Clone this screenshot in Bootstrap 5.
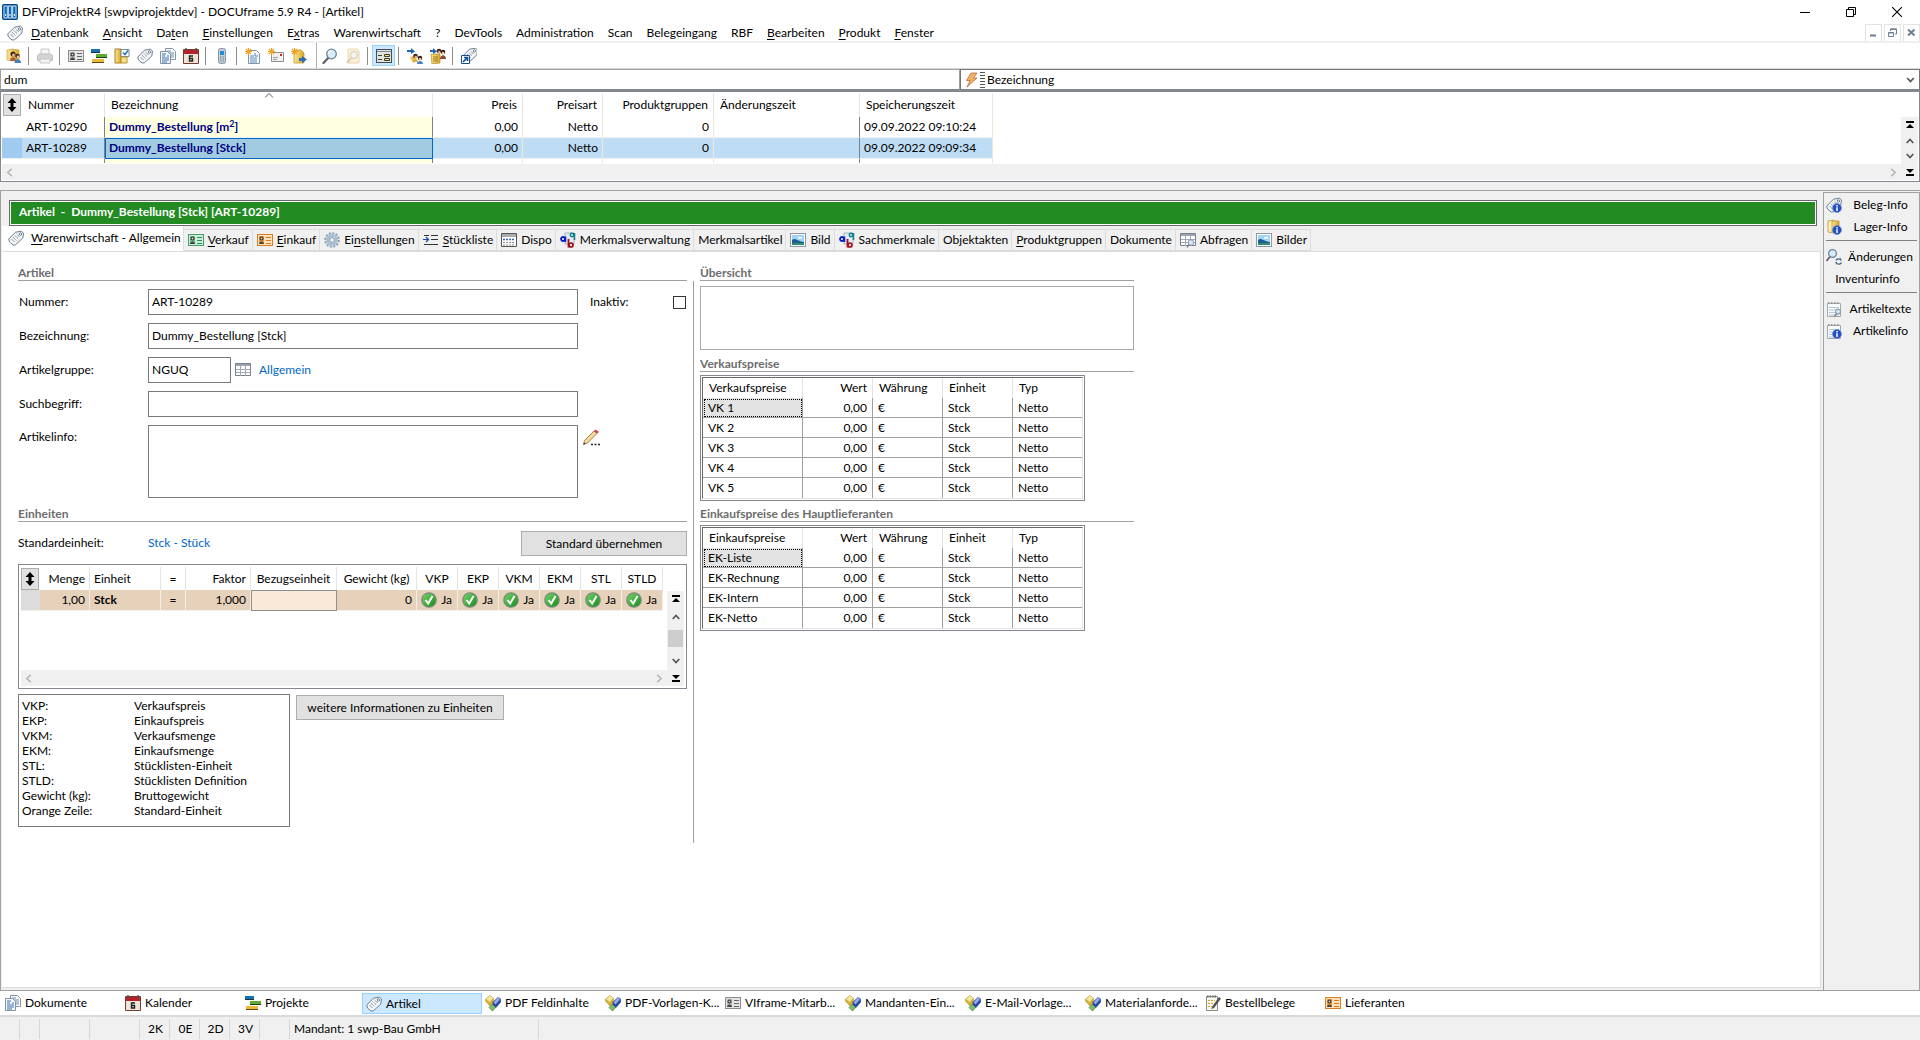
<!DOCTYPE html>
<html lang="de">
<head>
<meta charset="utf-8">
<meta name="viewport" content="width=device-width, initial-scale=1">
<title>DFViProjektR4 [swpviprojektdev] - DOCUframe 5.9 R4 - [Artikel]</title>
<link href="https://cdn.jsdelivr.net/npm/bootstrap@5.3.0/dist/css/bootstrap.min.css" rel="stylesheet">
<style>
:root{--face:#f0f0f0;--line:#a0a0a0;--edge:#828790;--soft:#d9d9d9}
body{font:12px/16px Lato,"Open Sans",sans-serif;color:#000;background:#fff}
a{color:inherit;text-decoration:none}
button,input,textarea,select{font:inherit;color:inherit}
u{text-underline-offset:2px}
.ico{width:16px;height:16px;flex:none;display:block}
.plainbtn{border:0;background:none;padding:0;display:flex;align-items:center;justify-content:center}
/* title bar and menu */
.titlebar{height:22px;padding:2px 0 0 2px}
.winbtn{width:46px;height:20px}
.menubar{height:19px;padding:2px 0 0 7px}
.menubar nav{gap:14px}
.mdi{gap:2px}
.mdi button{width:17px;height:18px;border:1px solid #e3e3e3}
.toolbar{height:28px;border-top:2px solid var(--face);border-bottom:1px solid var(--soft);padding-left:2px}
.tool{width:23px;height:21px}
.tool.on{background:#cce8ff;border:1px solid #99d1ff}
.tsep{width:1px;height:18px;background:#8a8a8a;margin:0 4px 0 3px}
.tsep.tall{height:25px;background:#b0b0b0;margin:0 1px 0 6px}
/* search */
.searchrow{height:22px}
.searchrow input{width:50%;border:1px solid #a0a0a0;border-bottom:2px solid #828790;padding:0 3px;outline:0}
.pick{width:50%;border:1px solid #767676;border-bottom:2px solid #828790;padding-left:3px}
.pick select{border:0;background:none;appearance:none;outline:0;padding:0 2px}
/* grids */
.sheet{table-layout:fixed;border-collapse:separate;border-spacing:0}
.sheet th{font-weight:400;white-space:nowrap}
.sheet td,.sheet th{overflow:hidden;white-space:nowrap;padding:0 4px}
.result{height:91px;border:1px solid var(--edge);padding:1px}
.result .sheet{width:991px}
.result th{height:24px;border-right:1px solid #e5e5e5;padding:0 5px 0 6px}
.result thead th:first-child{padding:1px 1px}
.result td{height:21px;border-right:1px solid #ece9d8;border-bottom:1px solid #f0f0f0}
.result td:nth-child(2),.result td:nth-child(3),.result td:nth-child(7){border-right-color:#808080}
.result td:nth-child(1){border-right:0}
.result th:nth-child(1){border-right:0}
.result .short td{height:4px;border-bottom:0;line-height:0}
.result td.hl{background:#ffffe1;color:#000080;font-weight:700}
.result .sel td{background:#bedcf4}
.result .sel td.hl{background:#a0cbe1;outline:1px solid #0066cc;outline-offset:-1px}
.result .sel td:first-child{background:#9fcbf0}
.result td.hl sup{font-size:9px;line-height:0}
.updown{width:18px;height:22px;border:1px solid #adadad;background:#e1e1e1}
.hbar{height:16px;background:var(--face);color:#b8b8b8;padding:0 3px}
.vbar{width:17px;background:var(--face)}
.splitgap{height:8px;background:var(--face)}
/* main */
.work{background:var(--face);border-top:1px solid var(--line);border-left:1px solid var(--line);border-bottom:1px solid var(--line)}
.workpane{padding:0 2px 2px 1px}
.docband{margin:9px 4px 0 7px;height:26px;border:1px solid #696969;padding:1px;background:#fff}
.docband h1{font-size:12px;line-height:20px;font-weight:700;color:#fff;background:#228b22;margin:0;padding:0 8px;height:22px}
.tabs{height:25px;align-items:flex-end}
.tabs .nav-link{border:1px solid #dcdcdc;border-left:0;border-radius:0;background:var(--face);height:22px;padding:0 3px 0 4px;color:#000;display:flex;align-items:center;gap:4px;margin:0;white-space:nowrap;line-height:16px}
.tabs .nav-link.active{background:#fff;height:25px;border-color:#fff #dcdcdc #fff #fff;padding:0 2px 2px 6px;gap:7px}
.page{background:#fff;border-right:1px solid #dcdcdc;border-bottom:1px solid #dcdcdc;border-top:1px solid #dcdcdc;padding:13px 0 0 16px}
.leftcol{width:669px}
.divider{width:1px;background:#a0a0a0;margin:16px 6px 0 6px;height:562px}
.rightcol{width:434px}
.group{font-size:12px;line-height:15px;font-weight:700;color:#6d6d6d;margin:0;height:16px;border-bottom:1px solid #a0a0a0}
.fieldline{height:26px;margin-bottom:8px}
.lab{width:130px;padding-left:1px}
.box{border:1px solid #7a7a7a;padding:0 3px 2px;width:430px;height:26px;background:#fff;outline:0;border-radius:0}
.box.slim{width:83px}
textarea.box{height:73px;resize:none;display:block}
.tick{appearance:none;width:13px;height:13px;border:1px solid #333;margin:0 1px 0 auto}
.inact{margin-left:12px}
.below{margin-top:8px}
.stdline{margin:9px 0 8px}
.wide{width:166px}
.linkish{color:#0066cc}
.face{border:1px solid #adadad;background:#e1e1e1;padding:0 8px;height:25px}
.face.more{width:208px;margin:1px 0 0 6px}
.legendrow{margin-top:5px}
.units{height:125px;border:1px solid var(--edge);padding:2px}
.units .sheet{width:642px}
.units th{height:23px;border-right:1px solid #e5e5e5}
.units td{height:21px;background:#e6d1bb;border-right:1px solid #f4eee6;border-bottom:1px solid #f0f0f0}
.units th:first-child{border:0;padding:0}
.units td:first-child{background:#dcdcdc;border-right:0}
.units td.cur{background:#fae8d8;border:1px solid #8f8f8f}
.units td.yes{padding:0 5px 0 4px}
.thumb{width:15px;height:17px;background:#cdcdcd}
.legend{width:272px;height:133px;border:1px solid #7a7a7a;padding:3px 3px;line-height:15px;margin:0}
.legend dt{font-weight:400;width:112px;flex:none}
.legend dd{margin:0}
.over{height:64px;border:1px solid #a9a9a9;resize:none;outline:0;display:block;width:100%;margin:5px 0 6px}
.pricebox{border:1px solid var(--edge);padding:1px;width:385px;margin:3px 0 5px}
.prices{width:381px;border-top:1px solid #696969;border-left:1px solid #696969;border-right:1px solid #e3e3e3;border-bottom:1px solid #e3e3e3}
.prices th{height:20px;border-right:1px solid #e3e3e3;padding:0 5px 0 6px}
.prices td{height:20px;border-right:1px solid #a0a0a0;border-bottom:1px solid #a0a0a0;padding:0 5px}
.prices td:last-child,.prices th:last-child{border-right:0}
.prices tr:last-child td{border-bottom:0}
.prices td.foc{background:#e3e3e3;outline:1px dotted #000;outline-offset:-2px}
/* side */
.side{width:97px;border-left:1px solid var(--line);border-right:1px solid var(--line);border-top:1px solid var(--line);margin-top:1px;padding:1px 2px}
.side a{height:22px;display:flex;align-items:center;gap:2px;white-space:nowrap}
.side a span{flex:1;text-align:center}
.side hr{margin:2px 0 5px;opacity:1;border-top:1px solid #808080}
/* bottom */
.taskbar{height:26px;border-bottom:2px solid var(--soft);padding:2px 0 1px 2px;background:#fff}
.taskbar a{width:120px;padding:0 2px 1px;gap:4px;display:flex;align-items:center;white-space:nowrap;border:1px solid transparent}
.taskbar a.on{background:#cce8ff;border-color:#99d1ff;padding:1px 3px 0}
.status{height:23px;background:var(--face);padding-top:2px}
.status span{border-right:1px solid #d7d7d7;height:20px;line-height:20px;text-align:center;padding-left:2px}
.w20{width:20px}.w30{width:30px}.w50{width:50px}
.status .client{width:249px;text-align:left;padding-left:4px}
</style>
</head>
<body class="d-flex flex-column min-vh-100">
<svg width="0" height="0" class="position-absolute" aria-hidden="true">
<defs>
<linearGradient id="gy" x1="0" x2="1"><stop offset="0" stop-color="#fbe591"/><stop offset="1" stop-color="#d9a826"/></linearGradient>
<linearGradient id="gg" x1="0" y1="0" x2="1" y2="1"><stop offset="0" stop-color="#79d66b"/><stop offset="1" stop-color="#0f8a16"/></linearGradient>
<symbol id="tag" viewBox="0 0 16 16"><path d="M.7 9 7.500 2.200l6-1 2 1.800-.7 5L7.500 14.800l-2.500.2L1.500 12z" fill="#f3f6f8" stroke="#6c7f90" stroke-linejoin="round"/><circle cx="12.500" cy="4" r="1.200" fill="#fff" stroke="#6c7f90"/><path d="M3.500 9 7 12.500M5.200 7.300 8.700 10.800M7 5.600 10.500 9.100M8.700 4 12 7.300" stroke="#5e6d7c" stroke-dasharray="1 .6"/></symbol>
<symbol id="card" viewBox="0 0 16 16"><rect x=".5" y="2.500" width="15" height="11" fill="var(--c1,#e4e4e4)" stroke="var(--c2,#8c8c8c)"/><rect x="2" y="4" width="5" height="8" fill="var(--c3,#bcbcbc)"/><circle cx="4.500" cy="6.500" r="1.500" fill="#f0d5bd" stroke="#333" stroke-width="1.200"/><path d="M2 12c0-3.500 5-3.500 5 0z" fill="#444"/><path d="M9 5.500h5M9 8.500h5M9 11.500h5" stroke="var(--c4,#666)"/></symbol>
<symbol id="gantt" viewBox="0 0 16 16"><path d="M0 1h9v3.500H0z" fill="#1573b5"/><path d="M0 4h9v1H0z" fill="#1d2f40"/><path d="M5 6h11v3H5z" fill="#5aad2f"/><path d="M5 9h11v1H5z" fill="#1f3d19"/><path d="M1 11h12v3.500H1z" fill="#efb93c"/><path d="M1 14h12v1H1z" fill="#5e4714"/></symbol>
<symbol id="door" viewBox="0 0 16 16"><path d="M1 1h6v14H1z" fill="url(#gy)" stroke="#a98226"/><path d="M7 1.500h8v7H7z" fill="#fff" stroke="#6f8ba6"/><path d="m9 4.500 2 2 3-4" fill="none" stroke="#2674b8" stroke-width="1.500"/><path d="M7 9h6v6H7z" fill="#f4dd8c" stroke="#b8912d"/></symbol>
<symbol id="docs" viewBox="0 0 16 16"><path d="M5.500.5h7l3 3v8h-10z" fill="#fff" stroke="#8292a1"/><path d="M7 3h4M9 5h5M9 7h5M9 9h5" stroke="#6687b0"/><path d="M.5 3.500h7l3 3v9H.5z" fill="#f4f8fc" stroke="#8292a1"/><path d="M2 6h4M2 8h3M7 8h2M2 10h7M2 12h7M2 14h5" stroke="#3f6fae"/></symbol>
<symbol id="cal" viewBox="0 0 16 16"><path d="M.5 1.500h15v14H.5z" fill="#ece5d8" stroke="#7a3a30"/><path d="M1 2h14v4H1z" fill="#b4232b"/><path d="M3 0v3M13 0v3" stroke="#555" stroke-width="1.500"/><path d="M10 8H6.500v5h3v-2.500H7" fill="none" stroke="#222" stroke-width="1.400"/></symbol>
<symbol id="people" viewBox="0 0 16 16"><path d="M1 2 6 1l7 1v10l-6 1-6-1z" fill="url(#gy)" stroke="#c99c34" stroke-width=".6"/><circle cx="7" cy="6" r="2.500" fill="#402418"/><circle cx="7.500" cy="7" r="1.500" fill="#e6b58c"/><path d="M4 13c0-5 6-5 6 0z" fill="#a85c40"/><circle cx="11.500" cy="8" r="2.300" fill="#402418"/><circle cx="12" cy="9" r="1.400" fill="#f0c7a0"/><path d="M8.500 15c0-5 6.500-5 6.500 0z" fill="#4683bd"/></symbol>
<symbol id="arrpeople" viewBox="0 0 16 16"><path d="M0 2h4V0l4 3.500L4 6V4H0z" fill="#1768bd"/><path d="M3 9l4-1 3 5-4 2z" fill="#e7bf50"/><circle cx="8.500" cy="8" r="2.300" fill="#402418"/><circle cx="8.800" cy="9" r="1.300" fill="#e6b58c"/><path d="M6 14c0-4 5-4 5 0z" fill="#e0b23c"/><circle cx="13" cy="10" r="2.200" fill="#2b1a14"/><circle cx="13" cy="11" r="1.300" fill="#f0c7a0"/><path d="M10 16c0-4 6-4 6 0z" fill="#4683bd"/></symbol>
<symbol id="handpeople" viewBox="0 0 16 16"><path d="M1 6h9v9l-8 1z" fill="url(#gy)" stroke="#b58b28" stroke-width=".7"/><path d="M3 9h5M3 11h5M3 13h5" stroke="#a17a20"/><path d="M0 2h3V0l4 3.500L3 6V4H0z" fill="#1768bd"/><circle cx="9" cy="3" r="2.300" fill="#402418"/><circle cx="9.300" cy="4" r="1.300" fill="#e6b58c"/><circle cx="13" cy="4" r="2.300" fill="#2b1a14"/><circle cx="13" cy="5.200" r="1.400" fill="#f0c7a0"/><path d="M10 11c0-5 6-5 6 0z" fill="#8d4c38"/></symbol>
<symbol id="printer" viewBox="0 0 16 16"><path d="M4 1h8v6H4z" fill="#f5f5f5" stroke="#c6c6c6"/><path d="M.5 7.500 2 6h12l1.500 1.500v5H.5z" fill="#d4d4d4" stroke="#bebebe"/><path d="M3 11h10v4H3z" fill="#f3f3f3" stroke="#c6c6c6"/></symbol>
<symbol id="phone" viewBox="0 0 16 16"><rect x="4.500" y=".5" width="7" height="15" rx="2" fill="#c5cdd6" stroke="#8795a3"/><path d="M6 3h4v4H6z" fill="#1d8ddb"/><path d="M6 9h4M6 11h4M6 13h4" stroke="#7b8794" stroke-dasharray="1 .5"/></symbol>
<symbol id="star" viewBox="0 0 16 16"><path d="M3.500 0v7M0 3.500h7M1 1l5 5M6 1 1 6" stroke="#f0a11c" stroke-width="1.100"/></symbol>
<symbol id="newdoc" viewBox="0 0 16 16"><path d="M3.500 2.500h8l3 3v10h-11z" fill="#f6fafd" stroke="#8193a5"/><path d="M5 8h4M5 10h7M5 12h7M5 14h7M10 5v3h3" stroke="#5f88b8" fill="none"/><use href="#star"/></symbol>
<symbol id="newmail" viewBox="0 0 16 16"><path d="M3.500 4.500h12v9h-12z" fill="#f2f2f2" stroke="#8e8e8e"/><path d="M5 9.500h5M5 11.500h4" stroke="#9a9a9a"/><path d="M12 6h2v2h-2z" fill="#c32b2b"/><use href="#star"/></symbol>
<symbol id="newfolder" viewBox="0 0 16 16"><path d="M3 2h7l3 3v10H3z" fill="url(#gy)" stroke="#b58b28" stroke-width=".7"/><path d="M8 10h3V8l5 3.500-5 3.500v-2H8z" fill="#2c6bb4"/><use href="#star"/></symbol>
<symbol id="lens" viewBox="0 0 16 16"><path d="m6.500 9.500-5 5.500" stroke="#635e6c" stroke-width="2.200" stroke-linecap="round"/><circle cx="9.500" cy="6" r="4.800" fill="#d4ecfb" stroke="#6c8294" stroke-width="1.300"/><path d="M6.500 6c0-2 1.500-3 3-3" fill="none" stroke="#fff" stroke-width="1.300"/></symbol>
<symbol id="lensoff" viewBox="0 0 16 16"><path d="M3 1h9l2 2v12H3z" fill="#fbf0d4" stroke="#e8d8ae"/><circle cx="9" cy="7" r="3.500" fill="#f3f3f0" stroke="#d2ccb8"/><path d="m6 10-4 5" stroke="#d2ccb8" stroke-width="2"/></symbol>
<symbol id="form" viewBox="0 0 16 16"><rect x=".5" y="1.500" width="15" height="13" fill="#e3e3dc" stroke="#404c58"/><path d="M1 3.500h14" stroke="#7a8a9a"/><path d="M2 7.500h4M2 11.500h4M8.500 6.500h5v2h-5zM8.500 10.500h5v2h-5z" stroke="#3c3c3c" fill="#ffd863"/></symbol>
<symbol id="taglink" viewBox="0 0 16 16"><use href="#tag" x="1" y="-1"/><path d="M.5 7.500h8v8h-8z" fill="#fff" stroke="#1a4e8c"/><path d="m2 14 4-4M3 9.500h3.500V13" stroke="#0b4c9c" stroke-width="1.600" fill="none"/></symbol>
<symbol id="app" viewBox="0 0 16 16"><rect x=".5" y=".5" width="15" height="15" rx="1" fill="#1268b3" stroke="#0a477e"/><path d="M2 2h3.300v12H2zM6.400 2h3.300v12H6.400zM10.700 2H14v12h-3.300z" fill="#1268b3" stroke="#d8ebfa" stroke-width=".9"/><path d="M3.600 10v2M8 10v2M12.400 10v2" stroke="#fff"/></symbol>
<symbol id="bolt" viewBox="0 0 16 16"><path d="M7 1h6L9.500 6H13L3 15l3-6.500H2.500z" fill="#f2b167" stroke="#b4703a" stroke-width=".8"/></symbol>
<symbol id="bars" viewBox="0 0 5 16"><path d="M0 .5h5M0 3.500h5M0 6.500h5M0 9.500h5M0 12.500h5M0 15.500h5" stroke="#555"/></symbol>
<symbol id="ud" viewBox="0 0 10 14"><path d="M5 0l4.500 5H6.500v4h3L5 14 .5 9h3V5h-3z"/></symbol>
<symbol id="totop" viewBox="0 0 8 8"><path d="M0 0h8v2H0zM4 3l4 4H0z"/></symbol>
<symbol id="tobot" viewBox="0 0 8 8"><path d="M0 6h8v2H0zM4 5 0 1h8z"/></symbol>
<symbol id="up" viewBox="0 0 8 8"><path d="m.7 6 3.300-3.500L7.300 6" fill="none" stroke="currentColor" stroke-width="1.700"/></symbol>
<symbol id="chev" viewBox="0 0 9 5"><path d="m.5 4.500 4-4 4 4" fill="none" stroke="#555"/></symbol>
<symbol id="down" viewBox="0 0 8 8"><path d="m.7 2 3.300 3.500L7.300 2" fill="none" stroke="currentColor" stroke-width="1.700"/></symbol>
<symbol id="left" viewBox="0 0 8 8"><path d="M6 .7 2.500 4 6 7.300" fill="none" stroke="currentColor" stroke-width="1.500"/></symbol>
<symbol id="right" viewBox="0 0 8 8"><path d="M2 .7 5.500 4 2 7.300" fill="none" stroke="currentColor" stroke-width="1.500"/></symbol>
<symbol id="gear" viewBox="0 0 16 16"><circle cx="8" cy="8" r="6.800" fill="none" stroke="#8aa3ba" stroke-width="2" stroke-dasharray="2.200 1.360"/><circle cx="8" cy="8" r="4.500" fill="none" stroke="#a9bed1" stroke-width="3"/><circle cx="8" cy="8" r="2.400" fill="#f0f0f0" stroke="#7f98af"/></symbol>
<symbol id="listin" viewBox="0 0 16 16"><path d="M8 3.500h7M8 7.500h7M1 12.500h14M1 3.500h5" stroke="#333"/><path d="M0 7.500h5M3 5 5.500 7.500 3 10" stroke="#1548a8" fill="none" stroke-width="1.200"/></symbol>
<symbol id="sched" viewBox="0 0 16 16"><path d="M.5 1.500h15v13H.5z" fill="#fff" stroke="#555"/><path d="M1 2h14v3H1z" fill="#a9adb2"/><path d="M2 7.500h12" stroke="#2a68b8" stroke-width="1.500" stroke-dasharray="2 1"/><path d="M2 10.500h12M2 13h12" stroke="#888" stroke-dasharray="2 1"/></symbol>
<symbol id="abq" viewBox="0 0 16 16"><path d="M5 1h9v11H5z" fill="#e4eaf1" stroke="#8ba0b4" stroke-width=".7"/><circle cx="3" cy="7" r="2" fill="none" stroke="#0a1ec8" stroke-width="1.800"/><path d="M5.500 4.500V10" stroke="#0a1ec8" stroke-width="1.500"/><path d="M8.500 7v8.500" stroke="#a01018" stroke-width="1.800"/><circle cx="11" cy="13" r="2" fill="none" stroke="#a01018" stroke-width="1.700"/><circle cx="12" cy="3" r="1.700" fill="none" stroke="#108088" stroke-width="1.500"/><path d="M14.500 1v7" stroke="#108088" stroke-width="1.500"/></symbol>
<symbol id="pic" viewBox="0 0 16 16"><rect x=".5" y="1.500" width="15" height="13" fill="#fff" stroke="#8d9aa6"/><path d="M2 3h12v10H2z" fill="#a3d4f3"/><path d="M2 8c3-3 5 1 12 2v3H2z" fill="#1d5f94"/><path d="M2 11h12v2H2z" fill="#2f8d6a"/><path d="M8 5h4v1.500H8z" fill="#fff"/></symbol>
<symbol id="tbl" viewBox="0 0 16 16"><path d="M.5 1.500h15v12H.5z" fill="#fff" stroke="#777f88"/><path d="M1 2h14v2H1z" fill="#9ba6b2"/><path d="M1 7.500h14M1 10.500h14M5.500 4v10M10.500 4v10" stroke="#a2a9b0"/></symbol>
<symbol id="tblq" viewBox="0 0 16 16"><use href="#tbl"/><circle cx="11" cy="10.500" r="2.800" fill="#d4e6f4" stroke="#8496a8"/><path d="m9 12.500-2 3" stroke="#777" stroke-width="1.300"/></symbol>
<symbol id="pencil" viewBox="0 0 18 18"><path d="m1.500 15.500 1-4L12 2l3 2.500-9.500 9.500z" fill="#f5d79a" stroke="#8d6b38" stroke-width=".8"/><path d="m12 2 1.500-1.500L17 3l-2 1.500z" fill="#c8424d"/><path d="m1.500 15.500.5-2 1.500 1.200z" fill="#222"/><path d="M9 15.500h2M12.500 15.500h2M16 15.500h2" stroke="#222" stroke-width="1.500"/></symbol>
<symbol id="ok" viewBox="0 0 16 16"><circle cx="8" cy="8" r="7.200" fill="url(#gg)" stroke="#7d8a7d" stroke-width="1.300"/><path d="m4.500 8 2.700 3.500L11.500 4" fill="none" stroke="#fff" stroke-width="2"/></symbol>
<symbol id="info" viewBox="0 0 16 16"><circle cx="11" cy="11" r="4.500" fill="#2350c0" stroke="#7391de" stroke-width=".7"/><path d="M11 8v1.500M11 10.200V14" stroke="#fff" stroke-width="1.500"/></symbol>
<symbol id="taginfo" viewBox="0 0 16 16"><use href="#tag"/><use href="#info"/></symbol>
<symbol id="boxinfo" viewBox="0 0 16 16"><path d="M2 2 8 1v13l-6-1z" fill="#fff0b0" stroke="#b58b28" stroke-width=".7"/><path d="M6 2h7v11H6z" fill="url(#gy)" stroke="#b58b28" stroke-width=".7"/><use href="#info"/></symbol>
<symbol id="lensref" viewBox="0 0 16 16"><path d="m4.500 7-4 5" stroke="#635e6c" stroke-width="1.800"/><circle cx="6.500" cy="4.500" r="3.900" fill="#d4ecfb" stroke="#6c8294" stroke-width="1.200"/><path d="M10 11.500c1-2 3-2 4.500-1M15.500 13.500c-1 2-3 2-4.500 1" fill="none" stroke="#3f6488" stroke-width="1.400"/><path d="M14 8.500v3h2zM11 16v-3H9z" fill="#3f6488"/></symbol>
<symbol id="note" viewBox="0 0 16 16"><path d="M1.500 2.500h13v13h-13z" fill="#f7f9fa" stroke="#a2aab1"/><path d="M2 2h12" stroke="#999" stroke-width="2" stroke-dasharray="1.500 1.500"/><path d="M3 6.500h10M3 9h10M3 11.500h10M3 14h10" stroke="#b4c6d2"/></symbol>
<symbol id="noteq" viewBox="0 0 16 16"><use href="#note"/><circle cx="12" cy="10.500" r="2.500" fill="#cfe5f5" stroke="#7a90a4"/><path d="m10.500 12.500-2 3" stroke="#666" stroke-width="1.300"/></symbol>
<symbol id="noteinfo" viewBox="0 0 16 16"><use href="#note"/><use href="#info"/></symbol>
<symbol id="notepen" viewBox="0 0 16 16"><path d="M1.500 1.500h11v14h-11z" fill="#f7f5e6" stroke="#8d8d85"/><path d="M2 1.500h10" stroke="#666" stroke-width="2" stroke-dasharray="1.500 1"/><path d="M3 5.500h7M3 8.500h5M3 11.500h4" stroke="#d0a02a" stroke-dasharray="2 1"/><path d="m7 12 7-10 2 1.500-7 9.500-2.500 1z" fill="#4b4f54"/></symbol>
<symbol id="cubes" viewBox="0 0 16 16"><path d="M7.500 9 11 12l-3.500 4L4 12.500z" fill="#7cc065" stroke="#357226" stroke-width=".6"/><path d="m5 .5 3.500 3L8 8l-3 3-4.500-5L.7 4z" fill="#d8b032" stroke="#9a7d22" stroke-width=".6"/><path d="m1 4 4-3.500L8 3.500 4.500 7z" fill="#f6e69a"/><path d="M13 2.500 15.700 4v3L11 12.500 8 9.500V7z" fill="#2445b0" stroke="#26418e" stroke-width=".6"/><path d="M8.500 7.500 13 2.500 15 4.500l-4.500 5z" fill="#94aeea"/></symbol>
</defs></svg>

<header class="titlebar d-flex align-items-center">
 <svg class="ico"><use href="#app"/></svg>
 <span class="ps-1 flex-grow-1 text-nowrap">DFViProjektR4 [swpviprojektdev] - DOCUframe 5.9 R4 - [Artikel]</span>
 <button class="plainbtn winbtn" aria-label="Minimieren"><svg width="10" height="10"><path d="M0 5.500h10" stroke="#000"/></svg></button>
 <button class="plainbtn winbtn" aria-label="Wiederherstellen"><svg width="10" height="10"><path d="M.5 2.500h7v7h-7zM2.500 2V.5h7v7H8" fill="none" stroke="#000"/></svg></button>
 <button class="plainbtn winbtn" aria-label="Schließen"><svg width="10" height="10"><path d="m0 0 10 10M10 0 0 10" stroke="#000" stroke-width="1.100"/></svg></button>
</header>
<div class="menubar d-flex align-items-center">
 <svg class="ico me-2"><use href="#tag"/></svg>
 <nav class="d-flex flex-grow-1 text-nowrap">
  <a href="#"><u>D</u>atenbank</a><a href="#"><u>A</u>nsicht</a><a href="#">Da<u>t</u>en</a><a href="#"><u>E</u>instellungen</a><a href="#">E<u>x</u>tras</a><a href="#">Warenwirtschaft</a><a href="#">?</a><a href="#">DevTools</a><a href="#">Administration</a><a href="#">Scan</a><a href="#">Belegeingang</a><a href="#">RBF</a><a href="#"><u>B</u>earbeiten</a><a href="#"><u>P</u>rodukt</a><a href="#"><u>F</u>enster</a>
 </nav>
 <div class="mdi d-flex">
  <button class="plainbtn" aria-label="Fenster minimieren"><svg width="9" height="9"><path d="M1 7.500h6" stroke="#6d7f92" stroke-width="2"/></svg></button>
  <button class="plainbtn" aria-label="Fenster wiederherstellen"><svg width="9" height="9"><path d="M.5 4.500h5v4h-5zM2.500 3V.8h6V6H7M.5 5h5M2.500 1.500h6" fill="none" stroke="#6d7f92"/></svg></button>
  <button class="plainbtn" aria-label="Fenster schließen"><svg width="9" height="9"><path d="m1 1.500 6.500 6M7.500 1.500l-6.500 6" stroke="#6d7f92" stroke-width="2"/></svg></button>
 </div>
</div>
<div class="toolbar d-flex align-items-center" role="toolbar">
 <button class="plainbtn tool" aria-label="Anmelden"><svg class="ico"><use href="#people"/></svg></button><i class="tsep"></i>
 <button class="plainbtn tool" aria-label="Drucken"><svg class="ico"><use href="#printer"/></svg></button><i class="tsep"></i>
 <button class="plainbtn tool" aria-label="Adressen"><svg class="ico"><use href="#card"/></svg></button>
 <button class="plainbtn tool" aria-label="Projekte"><svg class="ico"><use href="#gantt"/></svg></button>
 <button class="plainbtn tool" aria-label="Vorgänge"><svg class="ico"><use href="#door"/></svg></button>
 <button class="plainbtn tool" aria-label="Artikel"><svg class="ico"><use href="#tag"/></svg></button>
 <button class="plainbtn tool" aria-label="Dokumente"><svg class="ico"><use href="#docs"/></svg></button>
 <button class="plainbtn tool" aria-label="Kalender"><svg class="ico"><use href="#cal"/></svg></button><i class="tsep"></i>
 <button class="plainbtn tool" aria-label="Telefon"><svg class="ico"><use href="#phone"/></svg></button><i class="tsep"></i>
 <button class="plainbtn tool" aria-label="Neues Dokument"><svg class="ico"><use href="#newdoc"/></svg></button>
 <button class="plainbtn tool" aria-label="Neue Nachricht"><svg class="ico"><use href="#newmail"/></svg></button>
 <button class="plainbtn tool" aria-label="Neuer Vorgang"><svg class="ico"><use href="#newfolder"/></svg></button><i class="tsep tall"></i>
 <button class="plainbtn tool" aria-label="Suchen"><svg class="ico"><use href="#lens"/></svg></button>
 <button class="plainbtn tool" aria-label="Ordnersuche"><svg class="ico"><use href="#lensoff"/></svg></button><i class="tsep"></i>
 <button class="plainbtn tool on" aria-label="Maske"><svg class="ico"><use href="#form"/></svg></button><i class="tsep"></i>
 <button class="plainbtn tool" aria-label="Weiterleiten"><svg class="ico"><use href="#arrpeople"/></svg></button>
 <button class="plainbtn tool" aria-label="Übergeben"><svg class="ico"><use href="#handpeople"/></svg></button><i class="tsep"></i>
 <button class="plainbtn tool" aria-label="Verknüpfen"><svg class="ico"><use href="#taglink"/></svg></button>
</div>
<div class="searchrow d-flex">
 <input type="text" value="dum" aria-label="Suche">
 <div class="pick d-flex align-items-center">
  <svg class="ico"><use href="#bolt"/></svg><svg width="5" height="16"><use href="#bars"/></svg>
  <select class="flex-grow-1" aria-label="Suchfeld"><option>Bezeichnung</option></select>
  <svg width="9" height="8" class="me-1" color="#555"><use href="#down"/></svg>
 </div>
</div>
<div class="result d-flex">
 <div class="flex-grow-1 d-flex flex-column">
  <div class="flex-grow-1 overflow-hidden">
  <table class="sheet">
   <colgroup><col style="width:20px"><col style="width:83px"><col style="width:328px"><col style="width:90px"><col style="width:80px"><col style="width:111px"><col style="width:146px"><col style="width:133px"></colgroup>
   <thead><tr><th><button class="plainbtn updown" aria-label="Sortierung"><svg width="10" height="14"><use href="#ud"/></svg></button></th><th>Nummer</th><th class="position-relative">Bezeichnung<svg width="9" height="5" class="position-absolute top-0 start-50 translate-middle-x"><use href="#chev"/></svg></th><th class="text-end">Preis</th><th class="text-end">Preisart</th><th class="text-end">Produktgruppen</th><th>Änderungszeit</th><th>Speicherungszeit</th></tr></thead>
   <tbody>
    <tr><td></td><td>ART-10290</td><td class="hl">Dummy_Bestellung [m<sup>2</sup>]</td><td class="text-end">0,00</td><td class="text-end">Netto</td><td class="text-end">0</td><td></td><td>09.09.2022 09:10:24</td></tr>
    <tr class="sel"><td></td><td>ART-10289</td><td class="hl">Dummy_Bestellung [Stck]</td><td class="text-end">0,00</td><td class="text-end">Netto</td><td class="text-end">0</td><td></td><td>09.09.2022 09:09:34</td></tr>
    <tr class="short"><td></td><td></td><td class="hl"></td><td></td><td></td><td></td><td></td><td></td></tr>
   </tbody>
  </table></div>
  <div class="hbar d-flex justify-content-between align-items-center"><svg width="9" height="9"><use href="#left"/></svg><svg width="9" height="9"><use href="#right"/></svg></div>
 </div>
 <div class="vbar d-flex flex-column align-items-center justify-content-between mt-4 py-1"><svg width="8" height="8"><use href="#totop"/></svg><svg width="8" height="8" color="#555"><use href="#up"/></svg><svg width="8" height="8" color="#555"><use href="#down"/></svg><svg width="8" height="8"><use href="#tobot"/></svg></div>
</div>
<div class="splitgap"></div>

<main class="work d-flex flex-grow-1">
 <section class="workpane flex-grow-1 d-flex flex-column">
  <div class="docband"><h1>Artikel &nbsp;- &nbsp;Dummy_Bestellung [Stck] [ART-10289]</h1></div>
  <nav class="tabs nav flex-nowrap">
   <a class="nav-link active" href="#"><svg class="ico"><use href="#tag"/></svg><span><u>W</u>arenwirtschaft - Allgemein</span></a>
   <a class="nav-link" href="#"><svg class="ico" style="--c1:#c9eed8;--c2:#4f9a70;--c3:#6fbf90;--c4:#2f8a58"><use href="#card"/></svg><span><u>V</u>erkauf</span></a>
   <a class="nav-link" href="#"><svg class="ico" style="--c1:#ffe2bd;--c2:#d97f22;--c3:#ef9a3c;--c4:#e07a10"><use href="#card"/></svg><span><u>E</u>inkauf</span></a>
   <a class="nav-link" href="#"><svg class="ico"><use href="#gear"/></svg><span>Ei<u>n</u>stellungen</span></a>
   <a class="nav-link" href="#"><svg class="ico"><use href="#listin"/></svg><span><u>S</u>tückliste</span></a>
   <a class="nav-link" href="#"><svg class="ico"><use href="#sched"/></svg><span>Dispo</span></a>
   <a class="nav-link" href="#"><svg class="ico"><use href="#abq"/></svg><span>Merkmalsverwaltung</span></a>
   <a class="nav-link" href="#">Merkmalsartikel</a>
   <a class="nav-link" href="#"><svg class="ico"><use href="#pic"/></svg><span>Bild</span></a>
   <a class="nav-link" href="#"><svg class="ico"><use href="#abq"/></svg><span>Sachmerkmale</span></a>
   <a class="nav-link" href="#">Objektakten</a>
   <a class="nav-link" href="#"><span><u>P</u>roduktgruppen</span></a>
   <a class="nav-link" href="#">Dokumente</a>
   <a class="nav-link" href="#"><svg class="ico"><use href="#tblq"/></svg><span>Abfragen</span></a>
   <a class="nav-link" href="#"><svg class="ico"><use href="#pic"/></svg><span>Bilder</span></a>
  </nav>
  <div class="page flex-grow-1 d-flex align-items-start">
   <div class="leftcol">
    <h2 class="group">Artikel</h2>
    <div class="fieldline d-flex align-items-center mt-2"><label class="lab" for="nr">Nummer:</label><input class="box" id="nr" value="ART-10289"><label class="inact" for="ina">Inaktiv:</label><input type="checkbox" class="tick" id="ina"></div>
    <div class="fieldline d-flex align-items-center"><label class="lab" for="bz">Bezeichnung:</label><input class="box" id="bz" value="Dummy_Bestellung [Stck]"></div>
    <div class="fieldline d-flex align-items-center"><label class="lab" for="ag">Artikelgruppe:</label><input class="box slim" id="ag" value="NGUQ"><svg class="ico ms-1 me-2"><use href="#tbl"/></svg><a class="linkish" href="#">Allgemein</a></div>
    <div class="fieldline d-flex align-items-center"><label class="lab" for="sb">Suchbegriff:</label><input class="box" id="sb"></div>
    <div class="d-flex align-items-start"><label class="lab pt-1" for="ai">Artikelinfo:</label><textarea class="box" id="ai"></textarea><button class="plainbtn ms-1 mt-1" aria-label="Bearbeiten"><svg width="18" height="18"><use href="#pencil"/></svg></button></div>
    <h2 class="group below">Einheiten</h2>
    <div class="stdline d-flex align-items-start"><span class="lab ps-0 pt-1">Standardeinheit:</span><a class="linkish me-auto pt-1" href="#">Stck - Stück</a><button class="face wide">Standard übernehmen</button></div>
    <div class="units d-flex">
     <div class="flex-grow-1 d-flex flex-column">
      <table class="sheet">
       <colgroup><col style="width:19px"><col style="width:50px"><col style="width:71px"><col style="width:25px"><col style="width:65px"><col style="width:86px"><col style="width:80px"><col style="width:41px"><col style="width:41px"><col style="width:41px"><col style="width:41px"><col style="width:41px"><col style="width:41px"></colgroup>
       <thead><tr><th><button class="plainbtn updown" aria-label="Sortierung"><svg width="10" height="14"><use href="#ud"/></svg></button></th><th class="text-end">Menge</th><th>Einheit</th><th class="text-center">=</th><th class="text-end">Faktor</th><th class="text-center">Bezugseinheit</th><th class="text-center">Gewicht (kg)</th><th class="text-center">VKP</th><th class="text-center">EKP</th><th class="text-center">VKM</th><th class="text-center">EKM</th><th class="text-center">STL</th><th class="text-center">STLD</th></tr></thead>
       <tbody><tr><td></td><td class="text-end">1,00</td><td class="fw-bold">Stck</td><td class="text-center">=</td><td class="text-end">1,000</td><td class="cur"></td><td class="text-end">0</td>
       <td class="yes"><span class="d-flex justify-content-between"><svg class="ico"><use href="#ok"/></svg>Ja</span></td><td class="yes"><span class="d-flex justify-content-between"><svg class="ico"><use href="#ok"/></svg>Ja</span></td><td class="yes"><span class="d-flex justify-content-between"><svg class="ico"><use href="#ok"/></svg>Ja</span></td><td class="yes"><span class="d-flex justify-content-between"><svg class="ico"><use href="#ok"/></svg>Ja</span></td><td class="yes"><span class="d-flex justify-content-between"><svg class="ico"><use href="#ok"/></svg>Ja</span></td><td class="yes"><span class="d-flex justify-content-between"><svg class="ico"><use href="#ok"/></svg>Ja</span></td></tr></tbody>
      </table>
      <div class="hbar mt-auto d-flex justify-content-between align-items-center"><svg width="9" height="9"><use href="#left"/></svg><svg width="9" height="9"><use href="#right"/></svg></div>
     </div>
     <div class="vbar d-flex flex-column align-items-center justify-content-between mt-4 py-1"><svg width="8" height="8"><use href="#totop"/></svg><svg width="8" height="8" color="#555"><use href="#up"/></svg><i class="thumb"></i><svg width="8" height="8" color="#555"><use href="#down"/></svg><svg width="8" height="8"><use href="#tobot"/></svg></div>
    </div>
    <div class="legendrow d-flex align-items-start">
     <dl class="legend">
      <div class="d-flex"><dt>VKP:</dt><dd>Verkaufspreis</dd></div><div class="d-flex"><dt>EKP:</dt><dd>Einkaufspreis</dd></div><div class="d-flex"><dt>VKM:</dt><dd>Verkaufsmenge</dd></div><div class="d-flex"><dt>EKM:</dt><dd>Einkaufsmenge</dd></div><div class="d-flex"><dt>STL:</dt><dd>Stücklisten-Einheit</dd></div><div class="d-flex"><dt>STLD:</dt><dd>Stücklisten Definition</dd></div><div class="d-flex"><dt>Gewicht (kg):</dt><dd>Bruttogewicht</dd></div><div class="d-flex"><dt>Orange Zeile:</dt><dd>Standard-Einheit</dd></div>
     </dl>
     <button class="face more">weitere Informationen zu Einheiten</button>
    </div>
   </div>
   <div class="divider"></div>
   <div class="rightcol">
    <h2 class="group">Übersicht</h2>
    <textarea class="over" aria-label="Übersicht"></textarea>
    <h2 class="group">Verkaufspreise</h2>
    <div class="pricebox"><table class="sheet prices">
     <colgroup><col style="width:100px"><col style="width:70px"><col style="width:70px"><col style="width:70px"><col></colgroup>
     <thead><tr><th>Verkaufspreise</th><th class="text-end">Wert</th><th>Währung</th><th>Einheit</th><th>Typ</th></tr></thead>
     <tbody><tr><td class="foc">VK 1</td><td class="text-end">0,00</td><td>€</td><td>Stck</td><td>Netto</td></tr><tr><td>VK 2</td><td class="text-end">0,00</td><td>€</td><td>Stck</td><td>Netto</td></tr><tr><td>VK 3</td><td class="text-end">0,00</td><td>€</td><td>Stck</td><td>Netto</td></tr><tr><td>VK 4</td><td class="text-end">0,00</td><td>€</td><td>Stck</td><td>Netto</td></tr><tr><td>VK 5</td><td class="text-end">0,00</td><td>€</td><td>Stck</td><td>Netto</td></tr></tbody>
    </table></div>
    <h2 class="group">Einkaufspreise des Hauptlieferanten</h2>
    <div class="pricebox"><table class="sheet prices">
     <colgroup><col style="width:100px"><col style="width:70px"><col style="width:70px"><col style="width:70px"><col></colgroup>
     <thead><tr><th>Einkaufspreise</th><th class="text-end">Wert</th><th>Währung</th><th>Einheit</th><th>Typ</th></tr></thead>
     <tbody><tr><td class="foc">EK-Liste</td><td class="text-end">0,00</td><td>€</td><td>Stck</td><td>Netto</td></tr><tr><td>EK-Rechnung</td><td class="text-end">0,00</td><td>€</td><td>Stck</td><td>Netto</td></tr><tr><td>EK-Intern</td><td class="text-end">0,00</td><td>€</td><td>Stck</td><td>Netto</td></tr><tr><td>EK-Netto</td><td class="text-end">0,00</td><td>€</td><td>Stck</td><td>Netto</td></tr></tbody>
    </table></div>
   </div>
  </div>
 </section>
 <aside class="side">
  <a href="#"><svg class="ico"><use href="#taginfo"/></svg><span>Beleg-Info</span></a>
  <a href="#"><svg class="ico"><use href="#boxinfo"/></svg><span>Lager-Info</span></a><hr>
  <a href="#"><svg class="ico"><use href="#lensref"/></svg><span>Änderungen</span></a>
  <a href="#"><span class="pe-2">Inventurinfo</span></a><hr>
  <a href="#"><svg class="ico"><use href="#noteq"/></svg><span>Artikeltexte</span></a>
  <a href="#"><svg class="ico"><use href="#noteinfo"/></svg><span>Artikelinfo</span></a>
 </aside>
</main>
<nav class="taskbar d-flex">
 <a href="#"><svg class="ico"><use href="#docs"/></svg>Dokumente</a><a href="#"><svg class="ico"><use href="#cal"/></svg>Kalender</a><a href="#"><svg class="ico"><use href="#gantt"/></svg>Projekte</a><a class="on" href="#"><svg class="ico"><use href="#tag"/></svg>Artikel</a><a href="#"><svg class="ico"><use href="#cubes"/></svg>PDF Feldinhalte</a><a href="#"><svg class="ico"><use href="#cubes"/></svg>PDF-Vorlagen-K...</a><a href="#"><svg class="ico"><use href="#card"/></svg>VIframe-Mitarb...</a><a href="#"><svg class="ico"><use href="#cubes"/></svg>Mandanten-Ein...</a><a href="#"><svg class="ico"><use href="#cubes"/></svg>E-Mail-Vorlage...</a><a href="#"><svg class="ico"><use href="#cubes"/></svg>Materialanforde...</a><a href="#"><svg class="ico"><use href="#notepen"/></svg>Bestellbelege</a><a href="#"><svg class="ico" style="--c1:#ffe2bd;--c2:#d97f22;--c3:#ef9a3c;--c4:#e07a10"><use href="#card"/></svg>Lieferanten</a>
</nav>
<footer class="status d-flex"><span class="w20"></span><span class="w20"></span><span class="w50"></span><span class="w50"></span><span class="w30">2K</span><span class="w30">0E</span><span class="w30">2D</span><span class="w30">3V</span><span class="w30"></span><span class="client">Mandant: 1 swp-Bau GmbH</span></footer>
<script src="https://cdn.jsdelivr.net/npm/bootstrap@5.3.0/dist/js/bootstrap.bundle.min.js"></script>
</body>
</html>
